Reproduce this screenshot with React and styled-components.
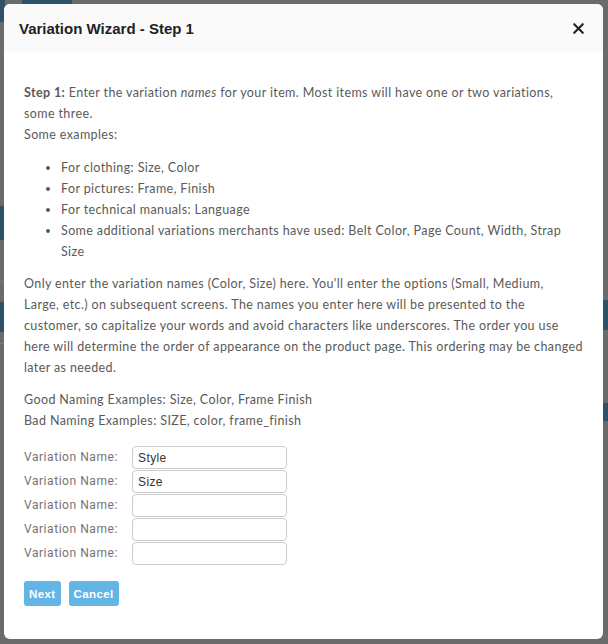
import React from 'react';
import styled, {createGlobalStyle} from "styled-components";
import {X} from "lucide-react";

const GlobalStyle = createGlobalStyle`
  html, body {
    margin: 0;
    padding: 0;
    background: #6b6b6b;
  }
`

const Backdrop = styled.div`
  position: fixed;
  inset: 0;
  padding: 4px 5px 5px 4px;
  display: flex;
  background-color: #6b6b6b;
  background-image:
    linear-gradient(#2d5267, #2d5267),
    linear-gradient(#2d5267, #2d5267),
    linear-gradient(#2d5267, #2d5267),
    linear-gradient(#2d5267, #2d5267),
    linear-gradient(#2d5267, #2d5267),
    linear-gradient(#2d5267, #2d5267),
    linear-gradient(#7a7a7a, #7a7a7a),
    linear-gradient(#7a7a7a, #7a7a7a);
  background-repeat: no-repeat;
  background-size: 5px 22px, 50px 22px, 6px 34px, 6px 30px, 6px 30px, 6px 18px, 6px 1px, 6px 1px;
  background-position: 0 0, 22px 0, 0 206px, 0 302px, 602px 300px, 602px 403px, 0 281px, 0 343px;
`

const Modal = styled.div`
  width: 599px;
  height: 635px;
  background: #fff;
  border-radius: 6px;
  overflow: hidden;
  display: flex;
  flex-direction: column;
`

const Header = styled.div`
  height: 48px;
  flex-shrink: 0;
  background: #fafafa;
  display: flex;
  align-items: center;
  justify-content: space-between;
  padding: 0 16px 0 15px;

  h2 {
    margin: 0;
    font-family: "Liberation Sans", Arial, sans-serif;
    font-size: 15px;
    font-weight: bold;
    color: #222;
  }

  button {
    border: none;
    background: none;
    padding: 0;
    display: flex;
    color: #222;
    cursor: pointer;
  }
`

const Body = styled.div`
  padding: 30px 12px 20px 20px;
  font-family: Lato, "Open Sans", sans-serif;
  font-size: 12.5px;
  letter-spacing: 0.385px;
  line-height: 21px;
  color: #5a5a5a;

  p {
    margin: 0 0 11px 0;
  }

  b {
    font-weight: 700;
  }
`

const Examples = styled.ul`
  margin: 12px 0 11px 0;
  padding-left: 37px;
`

const Fields = styled.div`
  margin-top: 15px;
  display: flex;
  flex-direction: column;
  gap: 1px;
`

const FieldRow = styled.label`
  display: flex;
  align-items: center;
  height: 23px;

  span {
    width: 108px;
    font-family: Roboto, "Liberation Sans", sans-serif;
    font-size: 12px;
    letter-spacing: 0.55px;
    color: #747474;
  }
`

const Input = styled.input`
  box-sizing: border-box;
  width: 155px;
  height: 23px;
  border: 1px solid #cccccc;
  border-radius: 4px;
  padding: 0 5px;
  font-family: "Liberation Sans", Arial, sans-serif;
  font-size: 12px;
  letter-spacing: 0.4px;
  color: #333;
  outline: none;
`

const Buttons = styled.div`
  display: flex;
  gap: 8px;
  margin-top: 16px;
`

const Button = styled.button`
  height: 25px;
  padding: 0 5px;
  border: none;
  border-radius: 3px;
  background: #62b5e5;
  color: #fff;
  font-family: "Liberation Sans", Arial, sans-serif;
  font-size: 11.5px;
  font-weight: bold;
  letter-spacing: 0.4px;
  cursor: pointer;
`

const names = ["Style", "Size", "", "", ""];

const App = () => {
    return (
        <>
            <GlobalStyle/>
            <Backdrop>
                <Modal>
                    <Header>
                        <h2>Variation Wizard - Step 1</h2>
                        <button><X size={17} strokeWidth={3}/></button>
                    </Header>
                    <Body>
                        <p style={{margin: 0}}>
                            <b>Step 1:</b> Enter the variation <i>names</i> for your item. Most items will have one or two variations,<br/>
                            some three.<br/>
                            Some examples:
                        </p>
                        <Examples>
                            <li>For clothing: Size, Color</li>
                            <li>For pictures: Frame, Finish</li>
                            <li>For technical manuals: Language</li>
                            <li>Some additional variations merchants have used: Belt Color, Page Count, Width, Strap<br/>Size</li>
                        </Examples>
                        <p>
                            Only enter the variation names (Color, Size) here. You'll enter the options (Small, Medium,<br/>
                            Large, etc.) on subsequent screens. The names you enter here will be presented to the<br/>
                            customer, so capitalize your words and avoid characters like underscores. The order you use<br/>
                            here will determine the order of appearance on the product page. This ordering may be changed<br/>
                            later as needed.
                        </p>
                        <p style={{margin: 0}}>
                            Good Naming Examples: Size, Color, Frame Finish<br/>
                            Bad Naming Examples: SIZE, color, frame_finish
                        </p>
                        <Fields>
                            {names.map((n, i) => (
                                <FieldRow key={i}>
                                    <span>Variation Name:</span>
                                    <Input defaultValue={n}/>
                                </FieldRow>
                            ))}
                        </Fields>
                        <Buttons>
                            <Button>Next</Button>
                            <Button>Cancel</Button>
                        </Buttons>
                    </Body>
                </Modal>
            </Backdrop>
        </>
    );
};

export default App;
